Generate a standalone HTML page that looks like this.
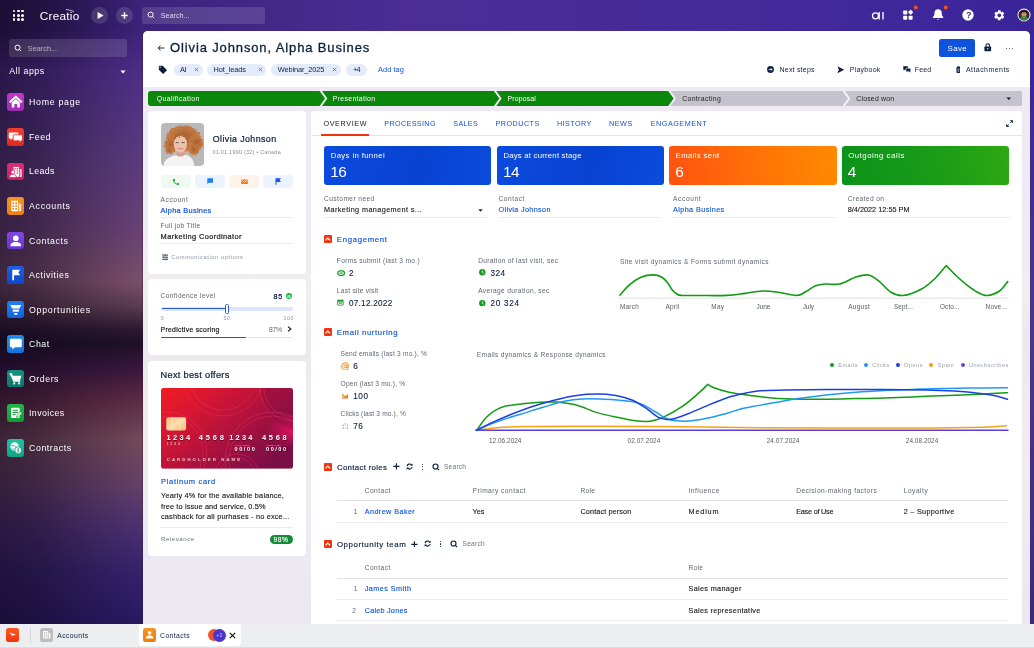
<!DOCTYPE html>
<html lang="en"><head><meta charset="utf-8"><title>Olivia Johnson, Alpha Busines</title>
<style>
html,body{margin:0;padding:0}
body{width:1034px;height:648px;overflow:hidden;font-family:"Liberation Sans",sans-serif;background:#2a1650}
#r{position:relative;width:1034px;height:648px;overflow:hidden;
background:linear-gradient(90deg,#2c1958 0,#3c237c 14%,#4b2d95 40%,#442b99 70%,#39249a 100%)}
#r>div,#r>span,#r>svg{position:absolute;display:block}
#r>span{white-space:nowrap}
#r{will-change:transform}
</style></head><body><div id="r">

<div style="left:0;top:0;width:143.5px;height:624px;background:linear-gradient(90deg,rgba(14,5,24,.55) 0,rgba(14,5,24,.45) 25%,rgba(14,5,24,.2) 65%,rgba(14,5,24,0) 100%),linear-gradient(180deg,rgba(74,44,133,0) 0,rgba(74,44,133,0) 28px,#4d2e88 70px,#5a3a80 150px,#6a4275 230px,#7b5069 282px,#5c3c50 306px,#2c1932 330px,#1e1128 343px,#391640 368px,#5c2a42 398px,#744a5a 440px,#664069 484px,#4c3172 528px,#35236c 572px,#271962 624px)"></div>
<div style="left:1030.3px;top:31px;width:3.7px;height:593px;background:linear-gradient(180deg,#38239a,#4a3590 50%,#3a2a7a)"></div>
<div style="left:12.6px;top:9.6px;width:2.60px;height:2.60px;background:#ffffff;border-radius:2px;"></div>
<div style="left:17.0px;top:9.6px;width:2.60px;height:2.60px;background:#ffffff;border-radius:2px;"></div>
<div style="left:21.4px;top:9.6px;width:2.60px;height:2.60px;background:#ffffff;border-radius:2px;"></div>
<div style="left:12.6px;top:14.0px;width:2.60px;height:2.60px;background:#ffffff;border-radius:2px;"></div>
<div style="left:17.0px;top:14.0px;width:2.60px;height:2.60px;background:#ffffff;border-radius:2px;"></div>
<div style="left:21.4px;top:14.0px;width:2.60px;height:2.60px;background:#ffffff;border-radius:2px;"></div>
<div style="left:12.6px;top:18.4px;width:2.60px;height:2.60px;background:#ffffff;border-radius:2px;"></div>
<div style="left:17.0px;top:18.4px;width:2.60px;height:2.60px;background:#ffffff;border-radius:2px;"></div>
<div style="left:21.4px;top:18.4px;width:2.60px;height:2.60px;background:#ffffff;border-radius:2px;"></div>
<svg style="left:65px;top:8.5px" width="10" height="4" viewBox="0 0 10 4"><path d="M.8.600C4 .900 6.500 1.500 9 2.800" stroke="#fff" stroke-width=".7" fill="none"/></svg>
<div style="left:90.5px;top:6.6px;width:17.40px;height:17.40px;background:rgba(255,255,255,.13);border-radius:9px;"></div>
<div style="left:116.1px;top:6.6px;width:17.40px;height:17.40px;background:rgba(255,255,255,.13);border-radius:9px;"></div>
<svg style="left:95.5px;top:10.8px" width="9" height="9" viewBox="0 0 9 9"><path d="M1.6 0.9 L7.6 4.5 L1.6 8.1 Z" fill="#fff"/></svg>
<svg style="left:120.3px;top:10.8px" width="9" height="9" viewBox="0 0 9 9"><path d="M4.5 1.3V7.7M1.3 4.5H7.7" stroke="#fff" stroke-width="1.5" fill="none"/></svg>
<div style="left:142.2px;top:6.5px;width:122.60px;height:17.30px;background:rgba(255,255,255,.13);border-radius:2.5px;"></div>
<svg style="left:146.6px;top:11.2px" width="8" height="8" viewBox="0 0 8 8"><circle cx="3.600" cy="3.600" r="2.500" stroke="#fff" stroke-width="1" fill="none"/><path d="M5.400 5.400L7 7" stroke="#fff" stroke-width="1"/></svg>
<div style="left:9.2px;top:39.3px;width:117.80px;height:17.30px;background:rgba(255,255,255,.13);border-radius:2.5px;"></div>
<svg style="left:14px;top:43.9px" width="8" height="8" viewBox="0 0 8 8"><circle cx="3.600" cy="3.600" r="2.500" stroke="#fff" stroke-width="1" fill="none"/><path d="M5.400 5.400L7 7" stroke="#fff" stroke-width="1"/></svg>
<svg style="left:120px;top:69.6px" width="6" height="4" viewBox="0 0 6 4"><path d="M0.4 0.5H5.6L3 3.5Z" fill="#fff"/></svg>
<div style="left:6.9px;top:93.4px;width:17.60px;height:17.60px;background:linear-gradient(180deg,#c536c8,#9a2db4);border-radius:3px;"></div>
<svg style="left:6.9px;top:93.40px" width="17.6" height="17.6" viewBox="0 0 18 18"><path d="M2.800 9.400L9 3.800L15.200 9.400" stroke="#fff" stroke-width="2" fill="none" stroke-linejoin="miter"/><path d="M4.900 9.800L9 6.200L13.100 9.800V14.800H10.500V11.300H7.500V14.800H4.900Z" fill="#fff"/></svg>
<div style="left:6.9px;top:127.96px;width:17.60px;height:17.60px;background:linear-gradient(180deg,#ef3f2c,#dc2a26);border-radius:3px;"></div>
<svg style="left:6.9px;top:127.96px" width="17.6" height="17.6" viewBox="0 0 18 18"><path d="M2.6 4.6h8.2a.8.8 0 0 1 .8.8v4.6a.8.8 0 0 1-.8.8H5.4L3.6 12.4V10.8H2.6a.8.8 0 0 1-.8-.8V5.4a.8.8 0 0 1 .8-.8z" fill="#fff"/><path d="M7.2 6.9h7.6a.9.9 0 0 1 .9.9v4.4a.9.9 0 0 1-.9.9h-.6v1.7l-2-1.7H7.2a.9.9 0 0 1-.9-.9V7.8a.9.9 0 0 1 .9-.9z" fill="#fff" stroke="#e5342a" stroke-width=".9"/></svg>
<div style="left:6.9px;top:162.51999999999998px;width:17.60px;height:17.60px;background:linear-gradient(180deg,#e02c73,#c81f62);border-radius:3px;"></div>
<svg style="left:6.9px;top:162.52px" width="17.6" height="17.6" viewBox="0 0 18 18"><path d="M6.6 4h5.6v10.2H6.6z" fill="#fff"/><path d="M13 6.4h2v7.8h-2z" fill="#fff"/><g fill="#d9266e"><rect x="7.6" y="5.2" width="1.3" height="1.3"/><rect x="9.9" y="5.2" width="1.3" height="1.3"/><rect x="9.9" y="7.5" width="1.3" height="1.3"/><rect x="9.9" y="9.8" width="1.3" height="1.3"/><rect x="13.5" y="7.6" width="1" height=".9"/><rect x="13.5" y="9.6" width="1" height=".9"/><rect x="13.5" y="11.6" width="1" height=".9"/></g><circle cx="6" cy="9.3" r="2.3" fill="#d9266e"/><circle cx="6" cy="9.3" r="1.6" fill="#fff"/><path d="M2.4 14.8c0-2.3 1.6-3.3 3.6-3.3s3.6 1 3.6 3.3z" fill="#fff" stroke="#d9266e" stroke-width=".8"/></svg>
<div style="left:6.9px;top:197.07999999999998px;width:17.60px;height:17.60px;background:linear-gradient(180deg,#f7941f,#ee7d14);border-radius:3px;"></div>
<svg style="left:6.9px;top:197.08px" width="17.6" height="17.6" viewBox="0 0 18 18"><rect x="4.3" y="3.9" width="7.2" height="10.6" rx=".8" fill="#fff"/><rect x="12.3" y="6.8" width="2.2" height="7.7" rx=".5" fill="#fff"/><g fill="#f28a1a"><rect x="5.6" y="5.4" width="1.7" height="1.9"/><rect x="8.5" y="5.4" width="1.7" height="1.9"/><rect x="5.6" y="8.3" width="1.7" height="1.9"/><rect x="8.5" y="8.3" width="1.7" height="1.9"/><rect x="5.6" y="11.2" width="1.7" height="1.9"/><rect x="8.5" y="11.2" width="1.7" height="1.9"/><rect x="12.9" y="8.2" width="1" height=".8"/><rect x="12.9" y="10.1" width="1" height=".8"/><rect x="12.9" y="12" width="1" height=".8"/></g></svg>
<div style="left:6.9px;top:231.64px;width:17.60px;height:17.60px;background:linear-gradient(180deg,#8246e6,#6a34d6);border-radius:3px;"></div>
<svg style="left:6.9px;top:231.64px" width="17.6" height="17.6" viewBox="0 0 18 18"><circle cx="9" cy="6.400" r="2.900" fill="#fff"/><path d="M3.500 14.600c0-3.300 2.400-4.400 5.500-4.400s5.500 1.100 5.500 4.400z" fill="#fff"/></svg>
<div style="left:6.9px;top:266.2px;width:17.60px;height:17.60px;background:linear-gradient(180deg,#1b5fe2,#0f48c6);border-radius:3px;"></div>
<svg style="left:6.9px;top:266.20px" width="17.6" height="17.6" viewBox="0 0 18 18"><path d="M5.400 3.800H13.400L11.600 6.600L13.400 9.400H7.200V14.600H5.400Z" fill="#fff"/></svg>
<div style="left:6.9px;top:300.76px;width:17.60px;height:17.60px;background:linear-gradient(180deg,#1f80f2,#1263e0);border-radius:3px;"></div>
<svg style="left:6.9px;top:300.76px" width="17.6" height="17.6" viewBox="0 0 18 18"><path d="M3.400 4.200H14.600L12.800 7.600H5.200Z" fill="#fff"/><rect x="5.800" y="8.800" width="6.400" height="2.100" rx=".5" fill="#fff"/><rect x="7.200" y="12.200" width="3.600" height="1.900" rx=".5" fill="#fff"/></svg>
<div style="left:6.9px;top:335.32px;width:17.60px;height:17.60px;background:linear-gradient(180deg,#1f8df0,#1473de);border-radius:3px;"></div>
<svg style="left:6.9px;top:335.32px" width="17.6" height="17.6" viewBox="0 0 18 18"><path d="M4.200 3.900h9.600a1.300 1.300 0 0 1 1.300 1.300v6a1.300 1.300 0 0 1-1.300 1.300H8.300L5.500 14.800V12.500H4.200a1.300 1.300 0 0 1-1.300-1.300V5.200a1.300 1.300 0 0 1 1.300-1.300z" fill="#fff"/></svg>
<div style="left:6.9px;top:369.88px;width:17.60px;height:17.60px;background:linear-gradient(180deg,#17907f,#0e766a);border-radius:3px;"></div>
<svg style="left:6.9px;top:369.88px" width="17.6" height="17.6" viewBox="0 0 18 18"><path d="M2.600 4h2.200l.6 1.800h9.400l-1.600 5.200H6.400z" fill="#fff"/><path d="M2.600 4h2.200L6.800 11.400h6.800" stroke="#fff" stroke-width="1.100" fill="none"/><circle cx="7.400" cy="13.700" r="1.100" fill="#fff"/><circle cx="12.400" cy="13.700" r="1.100" fill="#fff"/></svg>
<div style="left:6.9px;top:404.44px;width:17.60px;height:17.60px;background:linear-gradient(180deg,#22b84a,#129a38);border-radius:3px;"></div>
<svg style="left:6.9px;top:404.44px" width="17.6" height="17.6" viewBox="0 0 18 18"><rect x="4.200" y="3.800" width="8.800" height="10.600" rx="1.200" fill="#fff"/><g stroke="#1a9e3a" stroke-width="1.100"><path d="M5.800 6.400h5.600M5.800 8.600h5.600M5.800 10.800h3"/></g><path d="M9.800 13.600l.5-2 3.700-3.700 1.500 1.500-3.700 3.700z" fill="#fff" stroke="#1a9e3a" stroke-width=".8"/></svg>
<div style="left:6.9px;top:439.0px;width:17.60px;height:17.60px;background:linear-gradient(180deg,#1fc2a2,#0fa386);border-radius:3px;"></div>
<svg style="left:6.9px;top:439.00px" width="17.6" height="17.6" viewBox="0 0 18 18"><circle cx="7.800" cy="7.600" r="4.300" fill="#fff"/><path d="M4 6.600c1.500.8 2.500-.3 3.800.3s1 2 2.600 1.700M5 10.400c1-.5 1.600-.2 2.400.4" stroke="#14a88a" stroke-width=".8" fill="none"/><circle cx="11.400" cy="11.400" r="3.500" fill="#fff" stroke="#14a88a" stroke-width="1"/><path d="M12.300 10.300c-.6-.5-1.800-.3-1.800.4 0 .9 1.900.5 1.900 1.400 0 .8-1.300.9-2 .4M11.400 9.400v4" stroke="#14a88a" stroke-width=".7" fill="none"/></svg>
<div style="left:142.3px;top:34px;width:0.90px;height:590.00px;background:rgba(50,14,44,.32);border-radius:0px;"></div>
<div style="left:143px;top:30.5px;width:887.30px;height:593.50px;background:linear-gradient(180deg,#edeaf4 0,#eeebf3 200px,#f1eef0 260px,#ebe9ed 310px,#efebee 370px,#efecf1 450px,#ece9f2 530px,#ebe8f3 594px);border-radius:5px;border-radius:5px 5px 0 0;"></div>
<div style="left:143px;top:30.5px;width:887.30px;height:56.10px;background:#ffffff;border-radius:5px;border-radius:5px 5px 0 0;"></div>
<svg style="left:156.800px;top:43.600px" width="8" height="8" viewBox="0 0 8 8"><path d="M7.400 4H1.200M3.500 1.700L1.100 4L3.500 6.300" stroke="#0c1f3f" stroke-width=".95" fill="none"/></svg>
<div style="left:939px;top:39.3px;width:36.00px;height:17.70px;background:#0d53db;border-radius:2.5px;"></div>
<div style="left:174px;top:63.5px;width:28.50px;height:12.30px;background:#e4ebfa;border-radius:7px;"></div>
<div style="left:207.2px;top:63.5px;width:59.20px;height:12.30px;background:#e4ebfa;border-radius:7px;"></div>
<div style="left:271.1px;top:63.5px;width:69.80px;height:12.30px;background:#e4ebfa;border-radius:7px;"></div>
<div style="left:345.8px;top:63.5px;width:20.90px;height:12.30px;background:#e4ebfa;border-radius:7px;"></div>
<svg style="left:193.7px;top:67.1px" width="5" height="5" viewBox="0 0 5 5"><path d="M0.8 0.8L4.2 4.2M4.2 0.8L0.8 4.2" stroke="#5d6b82" stroke-width=".8"/></svg>
<svg style="left:257.7px;top:67.1px" width="5" height="5" viewBox="0 0 5 5"><path d="M0.8 0.8L4.2 4.2M4.2 0.8L0.8 4.2" stroke="#5d6b82" stroke-width=".8"/></svg>
<svg style="left:332.1px;top:67.1px" width="5" height="5" viewBox="0 0 5 5"><path d="M0.8 0.8L4.2 4.2M4.2 0.8L0.8 4.2" stroke="#5d6b82" stroke-width=".8"/></svg>
<svg style="left:147.6px;top:91px" width="874.6" height="15" viewBox="0 0 874.6 15"><rect x="0" y="0" width="524.8" height="15" rx="3" fill="#0b870b"/><rect x="518.8" y="0" width="355.8" height="15" rx="3" fill="#c4c3cd"/><path d="M514.8 0H521.0L526.8 7.5L521.0 15H514.8Z" fill="#0b870b"/><path d="M172.4 -0.6L178.2 7.5L172.4 15.6" stroke="#f4f4fa" stroke-width="1.9" fill="none"/><path d="M346.7 -0.6L352.5 7.5L346.7 15.6" stroke="#f4f4fa" stroke-width="1.9" fill="none"/><path d="M521.0 -0.6L526.8 7.5L521.0 15.6" stroke="#f4f4fa" stroke-width="1.9" fill="none"/><path d="M695.3 -0.6L701.1 7.5L695.3 15.6" stroke="#f4f4fa" stroke-width="1.9" fill="none"/><path d="M858.4 6.4h4.8l-2.400 2.700z" fill="#1a1a22"/></svg>
<div style="left:148.2px;top:110.7px;width:158.00px;height:163.20px;background:#ffffff;border-radius:4px;"></div>
<div style="left:148.2px;top:279.2px;width:158.00px;height:76.30px;background:#ffffff;border-radius:4px;"></div>
<div style="left:148.2px;top:361px;width:158.00px;height:194.60px;background:#ffffff;border-radius:4px;"></div>
<div style="left:311px;top:110.5px;width:711.00px;height:513.50px;background:#ffffff;border-radius:4px;border-radius:4px 4px 0 0;"></div>
<div style="left:160.8px;top:175.3px;width:29.90px;height:12.50px;background:#f0f9f1;border-radius:3.5px;"></div>
<div style="left:195px;top:175.3px;width:29.90px;height:12.50px;background:#ebf3fe;border-radius:3.5px;"></div>
<div style="left:229.2px;top:175.3px;width:29.90px;height:12.50px;background:#fef3eb;border-radius:3.5px;"></div>
<div style="left:263.4px;top:175.3px;width:29.90px;height:12.50px;background:#edf3fe;border-radius:3.5px;"></div>
<div style="left:160.6px;top:217px;width:132.70px;height:0.60px;background:#eaecf0;border-radius:0px;"></div>
<div style="left:160.6px;top:242.8px;width:132.70px;height:0.60px;background:#eaecf0;border-radius:0px;"></div>
<div style="left:285.6px;top:292.6px;width:6.80px;height:6.80px;background:#18b34a;border-radius:3.4px;"></div>
<div style="left:287.3px;top:294.6px;width:3.40px;height:3.00px;background:#7fe3a0;border-radius:0.8px;"></div>
<div style="left:160.6px;top:306.8px;width:132.70px;height:3.90px;background:#dce6fb;border-radius:2px;"></div>
<div style="left:162px;top:308.1px;width:65.00px;height:1.40px;background:#2b5cd9;border-radius:1px;"></div>
<div style="left:224.9px;top:303.9px;width:4.20px;height:9.80px;background:#ffffff;border-radius:1.6px;box-sizing:border-box;border:1.1px solid #2b5cd9;"></div>
<svg style="left:286.5px;top:326.3px" width="5" height="6" viewBox="0 0 5 6"><path d="M1 0.6L3.8 3L1 5.4" stroke="#0c1f3f" stroke-width="1.2" fill="none"/></svg>
<div style="left:160.6px;top:336.5px;width:132.70px;height:1.90px;background:#dce6fb;border-radius:1px;"></div>
<div style="left:160.6px;top:336.5px;width:85.20px;height:1.90px;background:#1f4fd6;border-radius:1px;"></div>
<div style="left:160.8px;top:527.2px;width:132.50px;height:0.60px;background:#eaecf0;border-radius:0px;"></div>
<div style="left:269.7px;top:534.5px;width:23.70px;height:9.30px;background:#138a36;border-radius:4.7px;"></div>
<div style="left:311px;top:135.2px;width:711.00px;height:0.60px;background:#e3e5ea;border-radius:0px;"></div>
<div style="left:321.3px;top:134.3px;width:47.70px;height:1.60px;background:#f0340f;border-radius:0px;"></div>
<div style="left:324.1px;top:145.8px;width:167.10px;height:39.00px;background:linear-gradient(100deg,#0c4be0,#0742d0 55%,#0a4cdc);border-radius:3px;"></div>
<div style="left:496.8px;top:145.8px;width:167.20px;height:39.00px;background:linear-gradient(100deg,#0c4be0,#0742d0 55%,#0a4cdc);border-radius:3px;"></div>
<div style="left:669px;top:145.8px;width:167.50px;height:39.00px;background:linear-gradient(80deg,#ff5210,#ff7606 60%,#ff8a00);border-radius:3px;"></div>
<div style="left:841.6px;top:145.8px;width:167.40px;height:39.00px;background:linear-gradient(80deg,#0c9219,#1a9c18 55%,#2ea812);border-radius:3px;"></div>
<div style="left:324px;top:217px;width:162.50px;height:0.60px;background:#eaecf0;border-radius:0px;"></div>
<div style="left:498.5px;top:217px;width:162.50px;height:0.60px;background:#eaecf0;border-radius:0px;"></div>
<div style="left:673px;top:217px;width:162.50px;height:0.60px;background:#eaecf0;border-radius:0px;"></div>
<div style="left:847.7px;top:217px;width:162.50px;height:0.60px;background:#eaecf0;border-radius:0px;"></div>
<svg style="left:478px;top:208.6px" width="5" height="3" viewBox="0 0 5 3"><path d="M0.3 0.3H4.7L2.5 2.8Z" fill="#222"/></svg>
<div style="left:323.9px;top:235.3px;width:8.10px;height:8.00px;background:#f0340f;border-radius:1px;"></div>
<svg style="left:325.2px;top:237.1px" width="5.6" height="4" viewBox="0 0 5.6 4"><path d="M0.6 3.3L2.8 1L5 3.3" stroke="#fff" stroke-width="1.1" fill="none"/></svg>
<div style="left:323.9px;top:328.3px;width:8.10px;height:8.00px;background:#f0340f;border-radius:1px;"></div>
<svg style="left:325.2px;top:330.1px" width="5.6" height="4" viewBox="0 0 5.6 4"><path d="M0.6 3.3L2.8 1L5 3.3" stroke="#fff" stroke-width="1.1" fill="none"/></svg>
<div style="left:830px;top:362.8px;width:4.00px;height:4.00px;background:#169c1f;border-radius:2px;"></div>
<div style="left:864.3px;top:362.8px;width:4.00px;height:4.00px;background:#1e96f0;border-radius:2px;"></div>
<div style="left:896px;top:362.8px;width:4.00px;height:4.00px;background:#1741e6;border-radius:2px;"></div>
<div style="left:929.3px;top:362.8px;width:4.00px;height:4.00px;background:#f59e1b;border-radius:2px;"></div>
<div style="left:961px;top:362.8px;width:4.00px;height:4.00px;background:#6a3fe0;border-radius:2px;"></div>
<div style="left:323.9px;top:462.8px;width:8.10px;height:8.00px;background:#f0340f;border-radius:1px;"></div>
<svg style="left:325.2px;top:464.6px" width="5.6" height="4" viewBox="0 0 5.6 4"><path d="M0.6 3.3L2.8 1L5 3.3" stroke="#fff" stroke-width="1.1" fill="none"/></svg>
<div style="left:336.8px;top:500.3px;width:671.70px;height:0.60px;background:#e1e3e7;border-radius:0px;"></div>
<div style="left:336.8px;top:521.8px;width:671.70px;height:0.60px;background:#eaecf0;border-radius:0px;"></div>
<div style="left:323.9px;top:540px;width:8.10px;height:8.00px;background:#f0340f;border-radius:1px;"></div>
<svg style="left:325.2px;top:541.8px" width="5.6" height="4" viewBox="0 0 5.6 4"><path d="M0.6 3.3L2.8 1L5 3.3" stroke="#fff" stroke-width="1.1" fill="none"/></svg>
<div style="left:336.8px;top:577.5px;width:671.70px;height:0.60px;background:#e1e3e7;border-radius:0px;"></div>
<div style="left:336.8px;top:599.1px;width:671.70px;height:0.60px;background:#eaecf0;border-radius:0px;"></div>
<div style="left:336.8px;top:620.3px;width:671.70px;height:0.60px;background:#eaecf0;border-radius:0px;"></div>
<div style="left:0px;top:623.8px;width:1034.00px;height:24.20px;background:#eceeef;border-radius:0px;"></div>
<div style="left:0px;top:647px;width:1034.00px;height:1.00px;background:#dcdee0;border-radius:0px;"></div>
<div style="left:138.7px;top:623.8px;width:102.70px;height:21.80px;background:#ffffff;border-radius:4px;border-radius:0 0 4px 4px;"></div>
<div style="left:5.8px;top:628.4px;width:13.30px;height:13.20px;background:linear-gradient(180deg,#ff5a1f,#f0340f);border-radius:2.5px;"></div>
<div style="left:30px;top:627.5px;width:0.50px;height:15.50px;background:#d3d6db;border-radius:0px;"></div>
<div style="left:40px;top:628.4px;width:12.90px;height:13.20px;background:#bdbdbd;border-radius:2.5px;"></div>
<div style="left:142.7px;top:628.4px;width:13.30px;height:13.20px;background:linear-gradient(180deg,#f7941f,#ee7d14);border-radius:2.5px;"></div>
<div style="left:207.5px;top:629px;width:12.00px;height:12.00px;background:#f0542a;border-radius:6px;"></div>
<div style="left:212.8px;top:628.5px;width:13.00px;height:13.00px;background:#4a35c9;border-radius:6.5px;"></div>
<svg style="left:228.5px;top:631.5px" width="7" height="7" viewBox="0 0 7 7"><path d="M0.8 0.8L6.2 6.2M6.2 0.8L0.8 6.2" stroke="#111" stroke-width="1.1"/></svg>
<svg style="left:871px;top:9.5px" width="14" height="11" viewBox="0 0 14 11"><circle cx="4.5" cy="5.8" r="3" stroke="#fff" stroke-width="1.35" fill="none"/><path d="M8.2 2.1V9.5M12 2.1V9.5" stroke="#fff" stroke-width="1.35"/></svg>
<svg style="left:902px;top:4px" width="18" height="18" viewBox="0 0 18 18"><rect x="1.2" y="6.6" width="4" height="4" rx=".7" fill="#fff"/><rect x="1.2" y="11.8" width="4" height="4" rx=".7" fill="#fff"/><rect x="6.6" y="11.8" width="4" height="4" rx=".7" fill="#fff"/><rect x="6.7" y="6.4" width="3.8" height="3.8" rx=".7" fill="#fff" transform="rotate(45 8.6 8.3)"/><circle cx="13.8" cy="3.4" r="2" fill="#f4511e"/></svg>
<svg style="left:931px;top:4px" width="18" height="18" viewBox="0 0 18 18"><path d="M7.1 5.2a3.600 3.600 0 0 1 3.600 3.600c0 2.400.7 3.400 1.500 4.200.3.300.1.900-.4.900H2.400c-.5 0-.7-.6-.4-.9.800-.8 1.500-1.800 1.500-4.200a3.600 3.600 0 0 1 3.600-3.600z" fill="#fff"/><path d="M5.900 15a1.300 1.300 0 0 0 2.400 0z" fill="#fff"/><circle cx="14.700" cy="3.400" r="2" fill="#f4511e"/></svg>
<svg style="left:962.4px;top:9.1px" width="12" height="12" viewBox="0 0 12 12"><circle cx="6" cy="6" r="5.700" fill="#fff"/></svg>
<svg style="left:992.5px;top:8.800px" width="12.600" height="12.600" viewBox="0 0 24 24"><path fill="#fff" d="M19.140 12.940c.040-.300.060-.610.060-.940 0-.320-.020-.640-.070-.940l2.030-1.580a.490.490 0 0 0 .12-.61l-1.920-3.320a.488.488 0 0 0-.59-.22l-2.390.96c-.5-.38-1.030-.7-1.620-.94l-.36-2.540a.484.484 0 0 0-.48-.41h-3.840c-.24 0-.43.170-.47.410l-.36 2.540c-.59.240-1.130.57-1.620.94l-2.390-.96c-.22-.08-.47 0-.59.220L2.740 8.870c-.12.210-.8.470.12.610l2.030 1.580c-.5.300-.9.630-.9.940s.2.640.7.940l-2.030 1.580a.49.490 0 0 0-.12.610l1.920 3.320c.12.220.37.290.59.220l2.390-.96c.5.380 1.030.7 1.620.94l.36 2.540c.5.240.24.410.48.410h3.840c.24 0 .44-.17.470-.41l.36-2.540c.59-.24 1.130-.56 1.620-.94l2.390.96c.22.080.47 0 .59-.22l1.920-3.320c.12-.22.070-.47-.12-.61l-2.010-1.580zM12 15.600c-1.980 0-3.600-1.620-3.600-3.600s1.620-3.600 3.600-3.600 3.600 1.620 3.600 3.600-1.620 3.600-3.600 3.600z"/></svg>
<svg style="left:1017.300px;top:8.100px" width="16.700" height="14" viewBox="0 0 16.700 14"><circle cx="7" cy="7" r="6.500" fill="#fff"/><circle cx="7" cy="7" r="5.600" fill="#3a2a24"/><ellipse cx="7" cy="6.300" rx="2.500" ry="3" fill="#c98f74"/><path d="M2.600 10.300c1.200-1.500 2.800-1.700 4.400-1.700s3.200.2 4.400 1.700a5.600 5.600 0 0 1-8.800 0z" fill="#2d8a4a"/><path d="M3.400 6.800c-.3-3.300 1.700-4.700 3.600-4.700s3.900 1.400 3.600 4.700c-.6-1.800-1.700-2.500-3.600-2.500s-3 .7-3.600 2.500z" fill="#2a1a16"/></svg>
<svg style="left:984.300px;top:43px" width="7.500" height="8.500" viewBox="0 0 7.500 8.500"><rect x=".4" y="3.500" width="6.700" height="4.800" rx=".8" fill="#0c1f3f"/><path d="M2 3.800V2.500a1.750 1.750 0 0 1 3.500 0V3.800" stroke="#0c1f3f" stroke-width="1.100" fill="none"/><circle cx="3.750" cy="5.700" r=".7" fill="#fff"/></svg>
<div style="left:1005.95px;top:47.5px;width:1.10px;height:1.10px;background:#333b4d;border-radius:1px;"></div>
<div style="left:1008.95px;top:47.5px;width:1.10px;height:1.10px;background:#333b4d;border-radius:1px;"></div>
<div style="left:1011.95px;top:47.5px;width:1.10px;height:1.10px;background:#333b4d;border-radius:1px;"></div>
<svg style="left:158.200px;top:65px" width="9.600" height="9.600" viewBox="0 0 24 24"><path fill="#0c1f3f" d="M21.410 11.580l-9-9C12.050 2.220 11.550 2 11 2H4c-1.100 0-2 .9-2 2v7c0 .55.220 1.050.59 1.420l9 9c.36.360.86.580 1.410.580s1.050-.22 1.410-.59l7-7c.37-.36.59-.86.59-1.410s-.23-1.060-.59-1.420zM5.500 7C4.670 7 4 6.330 4 5.500S4.670 4 5.500 4 7 4.670 7 5.500 6.330 7 5.500 7z"/></svg>
<svg style="left:767.400px;top:66.200px" width="7" height="7" viewBox="0 0 7 7"><circle cx="3.500" cy="3.500" r="3.400" fill="#0c1f3f"/><path d="M1.700 3.500H5M3.700 2.100L5.100 3.500L3.700 4.900" stroke="#fff" stroke-width=".8" fill="none"/></svg>
<svg style="left:837.200px;top:65.800px" width="7.500" height="7.600" viewBox="0 0 7.500 7.600"><path d="M.4.300L7.200 3.800L.4 7.300L1.900 3.800Z" fill="#0c1f3f"/></svg>
<svg style="left:902.600px;top:66.300px" width="8" height="7" viewBox="0 0 8 7"><path d="M.3.300h4.600v3.400H1.700L.8 4.600V3.700H.3z" fill="#0c1f3f"/><path d="M3 2.300h4.700v3.400h-.5v1l-1.100-1H3z" fill="#0c1f3f" stroke="#fff" stroke-width=".5"/></svg>
<svg style="left:955.600px;top:65.700px" width="4.800" height="7.700" viewBox="0 0 5.500 8.800"><path d="M.5 2.600a2.250 2.250 0 0 1 4.500 0V6.200a2.250 2.250 0 0 1-4.500 0z" fill="#0c1f3f"/><path d="M2.100 2.800V5.800a.65.650 0 0 0 1.300 0V2.600" stroke="#fff" stroke-width=".55" fill="none"/></svg>
<svg style="left:1005.800px;top:119.600px" width="7.200" height="7.200" viewBox="0 0 7.200 7.200"><path d="M4.300.4H6.800V2.900ZM2.900 6.800H.4V4.300Z" fill="#0c1f3f" stroke="#0c1f3f" stroke-width=".5" stroke-linejoin="round"/><path d="M6.300.9L4.400 2.800M.9 6.300L2.800 4.400" stroke="#0c1f3f" stroke-width="1"/></svg>
<svg style="left:160.800px;top:123px" width="43.200" height="43" viewBox="0 0 43.200 43">
<defs><clipPath id="pc"><rect width="43.200" height="43" rx="4"/></clipPath>
<filter id="bl" x="-20%" y="-20%" width="140%" height="140%"><feGaussianBlur stdDeviation=".6"/></filter>
<filter id="fz" x="-20%" y="-20%" width="140%" height="140%"><feTurbulence type="fractalNoise" baseFrequency=".55" numOctaves="2" seed="7" result="n"/><feDisplacementMap in="SourceGraphic" in2="n" scale="4.500" xChannelSelector="R" yChannelSelector="G"/><feGaussianBlur stdDeviation=".35"/></filter>
<radialGradient id="hg" cx=".5" cy=".45" r=".6"><stop offset="0" stop-color="#a95f30"/><stop offset=".6" stop-color="#bf763f"/><stop offset="1" stop-color="#d08c55"/></radialGradient></defs>
<g clip-path="url(#pc)"><rect width="43.200" height="43" fill="#b9b9bb"/>
<g fill="url(#hg)" filter="url(#fz)"><ellipse cx="22.500" cy="15.500" rx="17.500" ry="13"/><circle cx="10" cy="22" r="7"/><circle cx="35.500" cy="20" r="7.500"/><circle cx="33" cy="27" r="5.500"/><circle cx="8.500" cy="27.500" r="4"/></g>
<path d="M16.500 27h6.500l1.500 7h-9.500z" fill="#d9a287"/>
<ellipse cx="19.400" cy="20.800" rx="6.600" ry="8.600" fill="#ecc3ad" filter="url(#bl)"/>
<path d="M12.500 18c0-5.500 3.500-8 7.500-8 3 0 6 2 7 6.500-3-1.300-4-3.500-5.500-4-3 .5-6.500 1.800-9 5.500z" fill="#b06634" filter="url(#fz)"/>
<path d="M14.600 19.600h3M20.600 19.600h3.200" stroke="#5f4638" stroke-width=".9"/>
<path d="M16.300 25.200q3 2.200 6.200 0q-3.100 1-6.200 0z" fill="#e07080" stroke="#d9717a" stroke-width=".5"/>
<path d="M2.500 43c.5-6.500 5-9 12.500-11 2.500 2.200 6.500 2.200 9-.3 5.500 1.500 8.500 4 9.500 11.300z" fill="#f3f3f3" filter="url(#bl)"/>
</g></svg>
<svg style="left:171.700px;top:177.600px" width="8" height="8" viewBox="0 0 24 24"><path fill="#1a9e2a" d="M6.620 10.790c1.440 2.830 3.760 5.140 6.590 6.590l2.200-2.200c.27-.27.670-.36 1.020-.24 1.120.37 2.330.57 3.570.57.550 0 1 .45 1 1V20c0 .55-.45 1-1 1-9.390 0-17-7.610-17-17 0-.55.450-1 1-1h3.500c.55 0 1 .45 1 1 0 1.250.2 2.450.57 3.570.11.350.3.740-.25 1.020l-2.200 2.200z"/></svg>
<svg style="left:206.800px;top:178.400px" width="6.400" height="6.400" viewBox="0 0 6.400 6.400"><path d="M.3.300H6.100V4.700H1.900L.3 6.100Z" fill="#1a7fe8"/></svg>
<svg style="left:240.600px;top:178.600px" width="7" height="5.800" viewBox="0 0 7 5.800"><rect x=".2" y=".4" width="6.600" height="5.200" rx=".7" fill="#f57a10"/><path d="M.6.800L3.500 3.300L6.400.8" stroke="#fdeee2" stroke-width=".8" fill="none"/></svg>
<svg style="left:275.400px;top:178.100px" width="6.200" height="7" viewBox="0 0 6.200 7"><path d="M.5.300H6L4.600 2.200L6 4.100H1.500V6.800H.5Z" fill="#1a4fe0"/></svg>
<svg style="left:161.500px;top:254.300px" width="6.400" height="6.400" viewBox="0 0 6.400 6.400"><g stroke="#0c1f3f" stroke-width=".9"><path d="M.2 1.100H2.400M3.800 1.100H6.200M.2 3.200H1.200M2.600 3.200H6.200M.2 5.300H3.400M4.800 5.300H6.200"/><path d="M3.100.2V2M1.900 2.300V4.100M4.100 4.400V6.200" stroke-width="1"/></g></svg>
<svg style="left:160.900px;top:387.800px" width="132" height="80.800" viewBox="0 0 132 80.800">
<defs><clipPath id="cc"><rect width="132" height="80.800" rx="2.800"/></clipPath>
<linearGradient id="cg" x1="0" y1="0" x2="1" y2=".75"><stop offset="0" stop-color="#f01d22"/><stop offset=".3" stop-color="#d51633"/><stop offset=".6" stop-color="#b0113d"/><stop offset=".85" stop-color="#8a0f44"/><stop offset="1" stop-color="#7a0e46"/></linearGradient>
<radialGradient id="cp" cx="1.020" cy=".52" r=".22"><stop offset="0" stop-color="#f0105e"/><stop offset="1" stop-color="#f0105e" stop-opacity="0"/></radialGradient>
<linearGradient id="ch" x1="0" y1="0" x2="1" y2="1"><stop offset="0" stop-color="#f6bf78"/><stop offset=".5" stop-color="#fbdcaa"/><stop offset="1" stop-color="#f3b56c"/></linearGradient></defs>
<g clip-path="url(#cc)"><rect width="132" height="80.800" fill="url(#cg)"/><rect width="132" height="80.800" fill="url(#cp)"/>
<path d="M100 0H132V42C116 38 102 22 100 0Z" fill="#7d0f47" opacity=".34"/>
<g fill="none" stroke="#ff3a6e" stroke-opacity=".5" stroke-width=".65"><circle cx="62" cy="-12" r="34"/><circle cx="62" cy="-12" r="40"/><circle cx="132" cy="0" r="33"/><circle cx="132" cy="0" r="29"/><circle cx="112" cy="72" r="44"/><circle cx="112" cy="72" r="48"/><circle cx="6" cy="64" r="36"/><circle cx="6" cy="64" r="40"/><circle cx="76" cy="88" r="22"/><circle cx="76" cy="88" r="18"/></g>
<rect x="5.300" y="29.300" width="19.800" height="13.200" rx="2" fill="url(#ch)"/>
<path d="M5.300 33.600h6.200v4.600H5.300M25.100 33.600h-6.200v4.600h6.200M11.500 29.300v13.200M18.900 29.300v13.200" stroke="#fde8c4" stroke-width=".5" fill="none"/>
</g></svg>
<svg style="left:336.800px;top:269.600px" width="8.200" height="6.200" viewBox="0 0 8.200 6.200"><rect x=".7" y=".9" width="6.800" height="4.400" rx="2.200" stroke="#149c22" stroke-width="1.200" fill="none"/><path d="M2.400 3.100H5.800" stroke="#149c22" stroke-width="1.100"/><path d="M3.700 0V6.200" stroke="#fff" stroke-width="0"/></svg>
<svg style="left:337.200px;top:299.300px" width="6.800" height="6.800" viewBox="0 0 6.800 6.800"><rect x=".2" y=".9" width="6.400" height="5.700" rx=".8" fill="#149c22"/><rect x="1.100" y="2.700" width="4.600" height="3" fill="#fff"/><rect x="1.700" y="3.400" width="3.400" height="1.200" fill="#149c22"/><path d="M1.800 0V1.500M5 0V1.500" stroke="#149c22" stroke-width=".9"/></svg>
<svg style="left:479px;top:269.4px" width="6.600" height="6.600" viewBox="0 0 6.600 6.600"><circle cx="3.300" cy="3.300" r="3.200" fill="#149c22"/><path d="M3.300 1.400V3.500L4.700 4.300" stroke="#fff" stroke-width=".8" fill="none"/></svg>
<svg style="left:479px;top:299.8px" width="6.600" height="6.600" viewBox="0 0 6.600 6.600"><circle cx="3.300" cy="3.300" r="3.200" fill="#149c22"/><path d="M3.300 1.400V3.500L4.700 4.300" stroke="#fff" stroke-width=".8" fill="none"/></svg>
<svg style="left:340.700px;top:361.700px" width="8.800" height="8.800" viewBox="0 0 8.800 8.800"><path d="M6.900 7.300A3.700 3.700 0 1 1 8.100 4.400C8.100 5.600 7.600 6.100 7 6.100S6 5.600 6 4.800V2.900" stroke="#f5820f" stroke-width="1" fill="none" stroke-linecap="round"/><circle cx="4.400" cy="4.400" r="1.550" stroke="#f5820f" stroke-width="1" fill="none"/></svg>
<svg style="left:341.700px;top:392.800px" width="6.600" height="6" viewBox="0 0 6.600 6"><path d="M.2.600L3.300 3.200L6.400.6V5.600H.2Z" fill="#f5820f"/><path d="M.2 3.400H2.400" stroke="#fff" stroke-width=".7"/></svg>
<svg style="left:341.700px;top:422.600px" width="6.800" height="6.800" viewBox="0 0 6.800 6.800"><g fill="#f5820f"><circle cx="3.400" cy=".9" r=".75"/><circle cx="5.700" cy="2.300" r=".75"/><circle cx="5.400" cy="4.900" r=".75"/><circle cx="1.400" cy="4.900" r=".75"/><circle cx="1.100" cy="2.300" r=".75"/><circle cx="3.400" cy="5.900" r=".6" opacity=".6"/></g></svg>
<svg style="left:393.0px;top:463.3px" width="6.800" height="6.800" viewBox="0 0 6.800 6.800"><path d="M3.400.3V6.500M.3 3.400H6.500" stroke="#0c1f3f" stroke-width="1.150"/></svg>
<svg style="left:405.6px;top:463.1px" width="7.200" height="7.200" viewBox="0 0 7.200 7.200"><path d="M1 3.200A2.700 2.700 0 0 1 5.700 2M6.200 4A2.700 2.700 0 0 1 1.500 5.200" stroke="#0c1f3f" stroke-width="1.100" fill="none"/><path d="M6.600.5V2.700H4.400ZM.6 6.700V4.500H2.800Z" fill="#0c1f3f"/></svg>
<div style="left:421.84999999999997px;top:463.54999999999995px;width:1.10px;height:1.10px;background:#0c1f3f;border-radius:1px;"></div>
<div style="left:421.84999999999997px;top:466.15px;width:1.10px;height:1.10px;background:#0c1f3f;border-radius:1px;"></div>
<div style="left:421.84999999999997px;top:468.75px;width:1.10px;height:1.10px;background:#0c1f3f;border-radius:1px;"></div>
<svg style="left:431.9px;top:462.9px" width="7.800" height="7.800" viewBox="0 0 7.800 7.800"><circle cx="3.500" cy="3.500" r="2.500" stroke="#0c1f3f" stroke-width="1.150" fill="none"/><path d="M5.300 5.300L7.200 7.200" stroke="#0c1f3f" stroke-width="1.150"/></svg>
<svg style="left:411.1px;top:540.6px" width="6.800" height="6.800" viewBox="0 0 6.800 6.800"><path d="M3.400.3V6.500M.3 3.400H6.500" stroke="#0c1f3f" stroke-width="1.150"/></svg>
<svg style="left:424.4px;top:540.4px" width="7.200" height="7.200" viewBox="0 0 7.200 7.200"><path d="M1 3.200A2.700 2.700 0 0 1 5.700 2M6.200 4A2.700 2.700 0 0 1 1.500 5.200" stroke="#0c1f3f" stroke-width="1.100" fill="none"/><path d="M6.600.5V2.700H4.400ZM.6 6.700V4.500H2.800Z" fill="#0c1f3f"/></svg>
<div style="left:440.05px;top:540.85px;width:1.10px;height:1.10px;background:#0c1f3f;border-radius:1px;"></div>
<div style="left:440.05px;top:543.45px;width:1.10px;height:1.10px;background:#0c1f3f;border-radius:1px;"></div>
<div style="left:440.05px;top:546.0500000000001px;width:1.10px;height:1.10px;background:#0c1f3f;border-radius:1px;"></div>
<svg style="left:450.2px;top:540.2px" width="7.800" height="7.800" viewBox="0 0 7.800 7.800"><circle cx="3.500" cy="3.500" r="2.500" stroke="#0c1f3f" stroke-width="1.150" fill="none"/><path d="M5.300 5.300L7.200 7.200" stroke="#0c1f3f" stroke-width="1.150"/></svg>
<svg style="left:5.800px;top:628.400px" width="13.300" height="13.200" viewBox="0 0 13.300 13.200"><path d="M3.200 4.300L10.300 6.900L5.600 7.500L7.300 9.200Z" fill="#fff"/></svg>
<svg style="left:40px;top:628.400px" width="12.900" height="13.200" viewBox="0 0 18 18"><rect x="4.300" y="3.900" width="7.200" height="10.600" rx=".8" fill="#fff"/><rect x="12.300" y="6.800" width="2.200" height="7.700" rx=".5" fill="#fff"/><g fill="#bdbdbd"><rect x="5.600" y="5.400" width="1.700" height="1.900"/><rect x="8.500" y="5.400" width="1.700" height="1.900"/><rect x="5.600" y="8.300" width="1.700" height="1.900"/><rect x="8.500" y="8.300" width="1.700" height="1.900"/><rect x="5.600" y="11.200" width="1.700" height="1.900"/><rect x="8.500" y="11.200" width="1.700" height="1.900"/></g></svg>
<svg style="left:142.700px;top:628.400px" width="13.300" height="13.200" viewBox="0 0 18 18"><circle cx="9" cy="6.600" r="2.500" fill="#fff"/><path d="M4 14.200c0-3 2.200-4.200 5-4.200s5 1.200 5 4.200z" fill="#fff"/></svg>
<svg style="left:0;top:0" width="1034" height="648" viewBox="0 0 1034 648">
<path d="M619 298.100H1008.500" stroke="#d6d8dc" stroke-width=".8"/>
<path d="M631 298.200v1.500M677 298.200v1.500M722.600 298.200v1.500M768.300 298.200v1.500M814 298.200v1.500M859.800 298.200v1.500M905.500 298.200v1.500M951.200 298.200v1.500M997 298.200v1.500" stroke="#dcdfe5" stroke-width=".6"/>
<path d="M619.9 295.2C621.5 293.5 625.9 287.8 629.4 284.8C632.9 281.8 637.0 278.9 641.0 277.2C645.0 275.5 649.7 274.9 653.2 274.9C656.7 274.9 659.5 275.8 661.9 277.2C664.3 278.6 666.0 280.9 667.7 283.0C669.4 285.1 670.8 288.2 672.3 290.0C673.8 291.8 675.5 293.1 677.0 294.0C678.5 294.9 677.8 295.1 681.6 295.4C685.4 295.6 692.5 295.5 700.0 295.5C707.5 295.5 719.4 295.8 726.9 295.4C734.4 295.0 739.2 294.1 745.0 293.4C750.8 292.7 756.2 291.2 761.7 291.0C767.2 290.8 772.3 291.4 778.1 292.2C783.9 292.9 792.0 295.6 796.6 295.5C801.2 295.4 802.9 293.1 806.0 291.5C809.1 289.9 811.8 287.4 815.0 286.1C818.2 284.9 821.2 284.4 825.3 284.0C829.4 283.6 834.5 285.2 839.6 284.0C844.7 282.8 851.2 278.5 856.0 277.0C860.8 275.5 864.5 274.4 868.3 275.0C872.1 275.6 874.8 277.9 878.6 280.8C882.4 283.7 886.8 289.8 890.9 292.2C895.0 294.6 898.1 296.0 903.2 295.5C908.3 295.0 916.3 291.8 921.6 289.0C926.9 286.2 930.9 282.4 935.0 278.5C939.1 274.6 944.3 267.8 946.2 265.6C947.8 267.2 952.6 272.3 956.0 275.5C959.4 278.7 963.2 282.1 966.7 284.9C970.2 287.6 973.6 290.2 977.0 292.0C980.4 293.8 983.5 295.7 987.2 295.5C991.0 295.3 996.1 293.3 999.5 291.0C1002.9 288.7 1006.3 283.2 1007.7 281.6" stroke="#0f9b0f" stroke-width="1.600" fill="none" stroke-linejoin="round" stroke-linecap="round"/>
</svg>
<svg style="left:0;top:0" width="1034" height="648" viewBox="0 0 1034 648" fill="none" stroke-width="1.500" stroke-linecap="round" stroke-linejoin="round">
<path d="M476.2 430.3C480.2 429.8 491.7 428.1 500.0 427.5C508.3 426.9 509.3 426.7 526.0 426.5C542.7 426.3 574.3 426.2 600.0 426.3C625.7 426.4 653.3 426.6 680.0 426.8C706.7 427.0 726.0 427.5 760.0 427.7C794.0 427.9 849.3 428.0 884.0 428.0C918.7 428.0 947.6 427.9 968.0 427.5C988.4 427.1 1000.1 426.1 1006.5 425.8" stroke="#f7a11a"/>
<path d="M476.200 430.300H1008" stroke="#5a3edb" stroke-width="1.400"/>
<path d="M476.7 430.4C477.5 429.2 479.9 425.5 481.6 423.2C483.3 420.9 485.1 418.7 487.0 416.8C488.9 414.9 490.6 413.2 493.2 411.6C495.8 410.0 498.6 408.2 502.5 407.0C506.4 405.8 510.2 405.2 516.4 404.4C522.6 403.6 532.8 402.7 539.6 402.3C546.4 401.9 551.2 401.7 557.0 402.1C562.8 402.5 569.6 403.6 574.4 404.6C579.2 405.7 582.4 407.1 586.0 408.4C589.6 409.7 591.2 410.9 596.2 412.4C601.2 413.8 609.2 415.7 615.8 417.1C622.3 418.5 629.9 420.1 635.5 420.8C641.1 421.5 644.8 421.9 649.5 421.3C654.2 420.7 657.9 419.7 663.5 417.1C669.1 414.5 677.0 410.1 683.1 405.9C689.2 401.7 695.9 395.5 700.0 391.9C704.1 388.3 706.5 385.6 707.8 384.3C708.8 384.9 710.6 386.4 714.0 387.7C717.4 389.0 721.9 390.6 728.0 391.9C734.1 393.2 743.1 394.5 750.4 395.5C757.7 396.5 763.7 397.4 772.0 398.0C780.3 398.6 790.6 399.0 800.0 399.2C809.4 399.4 818.7 399.3 828.1 399.2C837.5 399.1 846.9 398.8 856.2 398.6C865.6 398.4 874.9 398.3 884.2 398.0C893.6 397.7 902.9 397.3 912.3 396.9C921.6 396.5 931.0 396.2 940.3 395.8C949.6 395.4 958.9 395.1 968.3 394.7C977.6 394.3 989.9 393.6 996.4 393.3C1002.9 393.0 1005.6 392.8 1007.5 392.7" stroke="#149c14"/>
<path d="M476.2 430.3C479.8 428.8 490.6 424.0 498.0 421.3C505.4 418.6 513.0 416.6 520.5 414.3C528.0 412.0 535.4 409.5 542.9 407.3C550.4 405.1 558.8 402.5 565.3 401.1C571.8 399.7 575.7 399.2 582.2 398.9C588.8 398.6 597.1 398.9 604.6 399.2C612.1 399.5 620.9 400.1 627.0 400.9C633.1 401.7 636.3 402.1 641.0 403.9C645.7 405.7 650.8 409.1 655.0 411.5C659.2 413.9 662.5 416.9 666.3 418.5C670.0 420.1 673.3 420.4 677.5 420.8C681.7 421.2 686.4 421.3 691.5 420.8C696.6 420.3 702.3 419.3 708.4 418.0C714.5 416.7 721.9 414.5 728.0 412.9C734.1 411.2 737.5 409.7 744.8 408.1C752.1 406.5 762.8 404.7 772.0 403.1C781.2 401.5 790.6 399.7 800.0 398.3C809.4 396.9 818.7 395.7 828.1 394.7C837.5 393.7 846.9 392.9 856.2 392.2C865.6 391.5 874.9 391.0 884.2 390.5C893.6 390.0 902.9 389.7 912.3 389.4C921.6 389.1 931.0 388.7 940.3 388.5C949.6 388.3 957.1 388.1 968.3 388.0C979.5 387.9 1001.0 387.8 1007.5 387.7" stroke="#1f9af2"/>
<path d="M476.2 430.3C479.8 428.6 489.7 423.5 498.0 419.9C506.3 416.3 516.6 412.0 526.0 408.7C535.4 405.4 545.7 402.5 554.1 400.3C562.5 398.1 569.6 396.5 576.6 395.5C583.6 394.5 589.7 394.1 596.2 394.1C602.7 394.1 609.7 394.5 615.8 395.5C621.9 396.5 627.5 398.1 632.6 400.3C637.8 402.5 642.5 405.9 646.7 408.7C650.9 411.5 654.6 415.3 657.9 417.1C661.2 418.9 663.5 419.2 666.3 419.4C669.1 419.6 671.0 419.5 674.7 418.5C678.4 417.5 683.1 415.7 688.7 413.5C694.3 411.3 701.9 407.8 708.4 405.1C714.9 402.4 721.9 399.5 728.0 397.5C734.1 395.5 739.8 394.4 744.8 393.3C749.8 392.2 751.1 391.6 758.0 391.0C764.9 390.4 774.3 390.1 786.0 389.9C797.7 389.7 811.7 389.7 828.1 389.6C844.5 389.6 867.8 389.6 884.2 389.6C900.6 389.7 914.6 389.7 926.3 389.9C938.0 390.1 944.9 390.4 954.3 391.0C963.6 391.6 975.4 392.9 982.4 393.8C989.4 394.7 992.2 395.2 996.4 396.1C1000.6 397.0 1005.6 398.7 1007.5 399.2" stroke="#1a40e4"/>
</svg>
<span style="left:39.70px;top:9px;font-size:11.8px;line-height:14px;color:#ffffff;letter-spacing:0.245px;">Creatio</span>
<span style="left:160.80px;top:11px;font-size:7.2px;line-height:9px;color:rgba(255,255,255,.8);letter-spacing:-0.008px;">Search...</span>
<span style="left:27.80px;top:44px;font-size:7.2px;line-height:9px;color:rgba(255,255,255,.6);letter-spacing:0.067px;">Search...</span>
<span style="left:9.20px;top:66px;font-size:8.8px;line-height:10px;color:#ffffff;letter-spacing:0.515px;">All apps</span>
<span style="left:29.00px;top:97px;font-size:8.8px;line-height:10px;color:#ffffff;letter-spacing:0.714px;">Home page</span>
<span style="left:29.00px;top:132px;font-size:8.8px;line-height:10px;color:#ffffff;letter-spacing:0.479px;">Feed</span>
<span style="left:29.00px;top:166px;font-size:8.8px;line-height:10px;color:#ffffff;letter-spacing:0.383px;">Leads</span>
<span style="left:29.00px;top:201px;font-size:8.8px;line-height:10px;color:#ffffff;letter-spacing:0.688px;">Accounts</span>
<span style="left:29.00px;top:236px;font-size:8.8px;line-height:10px;color:#ffffff;letter-spacing:0.612px;">Contacts</span>
<span style="left:29.00px;top:270px;font-size:8.8px;line-height:10px;color:#ffffff;letter-spacing:0.587px;">Activities</span>
<span style="left:29.00px;top:305px;font-size:8.8px;line-height:10px;color:#ffffff;letter-spacing:0.731px;">Opportunities</span>
<span style="left:29.00px;top:339px;font-size:8.8px;line-height:10px;color:#ffffff;letter-spacing:0.550px;">Chat</span>
<span style="left:29.00px;top:374px;font-size:8.8px;line-height:10px;color:#ffffff;letter-spacing:0.522px;">Orders</span>
<span style="left:29.00px;top:408px;font-size:8.8px;line-height:10px;color:#ffffff;letter-spacing:0.417px;">Invoices</span>
<span style="left:29.00px;top:443px;font-size:8.8px;line-height:10px;color:#ffffff;letter-spacing:0.568px;">Contracts</span>
<span style="left:170.00px;top:40px;font-size:13.0px;line-height:15px;color:#0c1f3f;-webkit-text-stroke:0.3px #0c1f3f;letter-spacing:0.872px;">Olivia Johnson, Alpha Busines</span>
<span style="left:947.60px;top:44px;font-size:8px;line-height:9px;color:#ffffff;letter-spacing:0.255px;">Save</span>
<span style="left:180.00px;top:65px;font-size:7.4px;line-height:9px;color:#0c1f3f;letter-spacing:-0.384px;">AI</span>
<span style="left:213.40px;top:65px;font-size:7.4px;line-height:9px;color:#0c1f3f;letter-spacing:-0.085px;">Hot_leads</span>
<span style="left:277.70px;top:65px;font-size:7.4px;line-height:9px;color:#0c1f3f;letter-spacing:-0.114px;">Webinar_2025</span>
<span style="left:352.90px;top:65px;font-size:7.4px;line-height:9px;color:#0c1f3f;letter-spacing:-0.600px;">+4</span>
<span style="left:378.00px;top:65px;font-size:7.4px;line-height:9px;color:#0d53db;letter-spacing:0.053px;">Add tag</span>
<span style="left:779.50px;top:66px;font-size:7.0px;line-height:7px;color:#0c1f3f;letter-spacing:0.214px;">Next steps</span>
<span style="left:849.70px;top:66px;font-size:7.0px;line-height:7px;color:#0c1f3f;letter-spacing:0.258px;">Playbook</span>
<span style="left:914.80px;top:66px;font-size:7.0px;line-height:7px;color:#0c1f3f;letter-spacing:0.144px;">Feed</span>
<span style="left:965.90px;top:66px;font-size:7.0px;line-height:7px;color:#0c1f3f;letter-spacing:0.448px;">Attachments</span>
<span style="left:156.80px;top:95px;font-size:6.9px;line-height:7px;color:#ffffff;letter-spacing:0.382px;">Qualification</span>
<span style="left:332.80px;top:95px;font-size:6.9px;line-height:7px;color:#ffffff;letter-spacing:0.318px;">Presentation</span>
<span style="left:507.50px;top:95px;font-size:6.9px;line-height:7px;color:#ffffff;letter-spacing:0.157px;">Proposal</span>
<span style="left:682.20px;top:95px;font-size:6.9px;line-height:7px;color:#222;letter-spacing:0.345px;">Contracting</span>
<span style="left:856.20px;top:95px;font-size:6.9px;line-height:7px;color:#222;letter-spacing:0.220px;">Closed won</span>
<span style="left:212.80px;top:134px;font-size:8.9px;line-height:10px;color:#0c1f3f;-webkit-text-stroke:0.22px #0c1f3f;letter-spacing:0.391px;">Olivia Johnson</span>
<span style="left:212.50px;top:149px;font-size:5.5px;line-height:6px;color:#8a909c;letter-spacing:0.222px;">01.01.1990 (32) • Canada</span>
<span style="left:160.60px;top:196px;font-size:6.7px;line-height:7px;color:#5f6673;letter-spacing:0.505px;">Account</span>
<span style="left:160.60px;top:206px;font-size:7.4px;line-height:9px;color:#0d53db;-webkit-text-stroke:0.2px #0d53db;letter-spacing:0.288px;">Alpha Busines</span>
<span style="left:160.60px;top:222px;font-size:6.7px;line-height:7px;color:#5f6673;letter-spacing:0.301px;">Full job Title</span>
<span style="left:160.60px;top:232px;font-size:7.4px;line-height:9px;color:#181818;-webkit-text-stroke:0.2px #181818;letter-spacing:0.384px;">Marketing Coordinator</span>
<span style="left:171.30px;top:254px;font-size:5.8px;line-height:6px;color:#8b93a1;letter-spacing:0.556px;">Communication options</span>
<span style="left:160.60px;top:292px;font-size:6.6px;line-height:7px;color:#5f6673;letter-spacing:0.389px;">Confidence level</span>
<span style="left:273.60px;top:292px;font-size:7.2px;line-height:9px;color:#0c1f3f;-webkit-text-stroke:0.25px #0c1f3f;letter-spacing:0.550px;">85</span>
<span style="left:160.80px;top:315px;font-size:5.2px;line-height:6px;color:#8b93a1;letter-spacing:0.109px;">0</span>
<span style="left:223.50px;top:315px;font-size:5.2px;line-height:6px;color:#8b93a1;letter-spacing:0.550px;">50</span>
<span style="left:283.60px;top:315px;font-size:5.2px;line-height:6px;color:#8b93a1;letter-spacing:0.522px;">100</span>
<span style="left:160.60px;top:326px;font-size:6.8px;line-height:7px;color:#181818;-webkit-text-stroke:0.2px #181818;letter-spacing:0.303px;">Predictive scoring</span>
<span style="left:269.00px;top:326px;font-size:6.8px;line-height:7px;color:#5f6673;letter-spacing:-0.305px;">87%</span>
<span style="left:160.60px;top:370px;font-size:9.2px;line-height:10px;color:#0c1f3f;-webkit-text-stroke:0.22px #0c1f3f;letter-spacing:0.301px;">Next best offers</span>
<span style="left:161.00px;top:477px;font-size:7.5px;line-height:9px;color:#0d53db;-webkit-text-stroke:0.15px #0d53db;letter-spacing:0.695px;">Platinum card</span>
<span style="left:161.00px;top:491px;font-size:7.35px;line-height:9px;color:#181818;-webkit-text-stroke:0.12px #181818;letter-spacing:0.183px;">Yearly 4% for the available balance,</span>
<span style="left:161.00px;top:502px;font-size:7.35px;line-height:9px;color:#181818;-webkit-text-stroke:0.12px #181818;letter-spacing:0.133px;">free to issue and service, 0.5%</span>
<span style="left:161.00px;top:512px;font-size:7.35px;line-height:9px;color:#181818;-webkit-text-stroke:0.12px #181818;letter-spacing:0.182px;">cashback for all purhases - no exce...</span>
<span style="left:161.00px;top:535px;font-size:6.2px;line-height:7px;color:#6b7280;letter-spacing:0.494px;">Relevance</span>
<span style="left:273.60px;top:536px;font-size:6.6px;line-height:7px;color:#ffffff;-webkit-text-stroke:0.15px #ffffff;letter-spacing:0.550px;">98%</span>
<span style="left:323.40px;top:119px;font-size:7.2px;line-height:9px;color:#181818;letter-spacing:0.656px;">OVERVIEW</span>
<span style="left:384.30px;top:119px;font-size:7.2px;line-height:9px;color:#0d53db;letter-spacing:0.362px;">PROCESSING</span>
<span style="left:453.30px;top:119px;font-size:7.2px;line-height:9px;color:#0d53db;letter-spacing:0.303px;">SALES</span>
<span style="left:495.40px;top:119px;font-size:7.2px;line-height:9px;color:#0d53db;letter-spacing:0.508px;">PRODUCTS</span>
<span style="left:557.00px;top:119px;font-size:7.2px;line-height:9px;color:#0d53db;letter-spacing:0.419px;">HISTORY</span>
<span style="left:609.00px;top:119px;font-size:7.2px;line-height:9px;color:#0d53db;letter-spacing:0.550px;">NEWS</span>
<span style="left:650.70px;top:119px;font-size:7.2px;line-height:9px;color:#0d53db;letter-spacing:0.542px;">ENGAGEMENT</span>
<span style="left:330.70px;top:151px;font-size:7.8px;line-height:9px;color:#ffffff;letter-spacing:0.352px;">Days in funnel</span>
<span style="left:330.30px;top:163px;font-size:15.4px;line-height:17px;color:#ffffff;letter-spacing:-0.600px;">16</span>
<span style="left:503.40px;top:151px;font-size:7.8px;line-height:9px;color:#ffffff;letter-spacing:0.200px;">Days at current stage</span>
<span style="left:503.00px;top:163px;font-size:15.4px;line-height:17px;color:#ffffff;letter-spacing:-0.600px;">14</span>
<span style="left:675.60px;top:151px;font-size:7.8px;line-height:9px;color:#ffffff;letter-spacing:0.339px;">Emails sent</span>
<span style="left:675.20px;top:163px;font-size:15.4px;line-height:17px;color:#ffffff;letter-spacing:0.550px;">6</span>
<span style="left:848.20px;top:151px;font-size:7.8px;line-height:9px;color:#ffffff;letter-spacing:0.514px;">Outgoing calls</span>
<span style="left:847.80px;top:163px;font-size:15.4px;line-height:17px;color:#ffffff;letter-spacing:0.550px;">4</span>
<span style="left:324.00px;top:195px;font-size:6.6px;line-height:7px;color:#5f6673;letter-spacing:0.434px;">Customer need</span>
<span style="left:498.50px;top:195px;font-size:6.6px;line-height:7px;color:#5f6673;letter-spacing:0.511px;">Contact</span>
<span style="left:673.00px;top:195px;font-size:6.6px;line-height:7px;color:#5f6673;letter-spacing:0.645px;">Account</span>
<span style="left:847.70px;top:195px;font-size:6.6px;line-height:7px;color:#5f6673;letter-spacing:0.408px;">Created on</span>
<span style="left:324.00px;top:205px;font-size:7.25px;line-height:9px;color:#181818;-webkit-text-stroke:0.12px #181818;letter-spacing:0.410px;">Marketing management s...</span>
<span style="left:498.50px;top:205px;font-size:7.25px;line-height:9px;color:#0d53db;-webkit-text-stroke:0.12px #0d53db;letter-spacing:0.341px;">Olivia Johnson</span>
<span style="left:673.00px;top:205px;font-size:7.25px;line-height:9px;color:#0d53db;-webkit-text-stroke:0.12px #0d53db;letter-spacing:0.403px;">Alpha Busines</span>
<span style="left:847.70px;top:205px;font-size:7.25px;line-height:9px;color:#181818;-webkit-text-stroke:0.12px #181818;letter-spacing:0.032px;">8/4/2022 12:55 PM</span>
<span style="left:336.80px;top:235px;font-size:7.75px;line-height:9px;color:#0d53db;-webkit-text-stroke:0.15px #0d53db;letter-spacing:0.694px;">Engagement</span>
<span style="left:336.80px;top:257px;font-size:6.6px;line-height:7px;color:#5f6673;letter-spacing:0.340px;">Forms submit (last 3 mo.)</span>
<span style="left:349.00px;top:269px;font-size:8.2px;line-height:9px;color:#0c1f3f;-webkit-text-stroke:0.12px #0c1f3f;letter-spacing:0.438px;">2</span>
<span style="left:336.80px;top:287px;font-size:6.6px;line-height:7px;color:#5f6673;letter-spacing:0.261px;">Last site visit</span>
<span style="left:349.00px;top:299px;font-size:8.2px;line-height:9px;color:#0c1f3f;-webkit-text-stroke:0.12px #0c1f3f;letter-spacing:0.246px;">07.12.2022</span>
<span style="left:478.20px;top:257px;font-size:6.6px;line-height:7px;color:#5f6673;letter-spacing:0.320px;">Duration of last visit, sec</span>
<span style="left:490.40px;top:269px;font-size:8.2px;line-height:9px;color:#0c1f3f;-webkit-text-stroke:0.12px #0c1f3f;letter-spacing:0.550px;">324</span>
<span style="left:478.20px;top:287px;font-size:6.6px;line-height:7px;color:#5f6673;letter-spacing:0.353px;">Average duration, sec</span>
<span style="left:490.40px;top:299px;font-size:8.2px;line-height:9px;color:#0c1f3f;-webkit-text-stroke:0.12px #0c1f3f;letter-spacing:0.711px;">20 324</span>
<span style="left:619.90px;top:258px;font-size:6.6px;line-height:7px;color:#5f6673;letter-spacing:0.397px;">Site visit dynamics &amp; Forms submit dynamics</span>
<span style="left:619.90px;top:303px;font-size:6.4px;line-height:7px;color:#555b66;letter-spacing:0.259px;">March</span>
<span style="left:665.40px;top:303px;font-size:6.4px;line-height:7px;color:#555b66;letter-spacing:0.276px;">April</span>
<span style="left:711.30px;top:303px;font-size:6.4px;line-height:7px;color:#555b66;letter-spacing:0.311px;">May</span>
<span style="left:756.40px;top:303px;font-size:6.4px;line-height:7px;color:#555b66;letter-spacing:0.047px;">June</span>
<span style="left:802.70px;top:303px;font-size:6.4px;line-height:7px;color:#555b66;letter-spacing:-0.025px;">July</span>
<span style="left:848.20px;top:303px;font-size:6.4px;line-height:7px;color:#555b66;letter-spacing:0.339px;">August</span>
<span style="left:894.00px;top:303px;font-size:6.4px;line-height:7px;color:#555b66;letter-spacing:0.086px;">Sept...</span>
<span style="left:940.00px;top:303px;font-size:6.4px;line-height:7px;color:#555b66;letter-spacing:0.112px;">Octo...</span>
<span style="left:985.60px;top:303px;font-size:6.4px;line-height:7px;color:#555b66;letter-spacing:0.192px;">Nove...</span>
<span style="left:336.80px;top:328px;font-size:7.75px;line-height:9px;color:#0d53db;-webkit-text-stroke:0.15px #0d53db;letter-spacing:0.612px;">Email nurturing</span>
<span style="left:340.60px;top:350px;font-size:6.6px;line-height:7px;color:#5f6673;letter-spacing:0.222px;">Send emails (last 3 mo.), %</span>
<span style="left:353.20px;top:362px;font-size:8.2px;line-height:9px;color:#0c1f3f;-webkit-text-stroke:0.12px #0c1f3f;letter-spacing:0.550px;">6</span>
<span style="left:340.60px;top:380px;font-size:6.6px;line-height:7px;color:#5f6673;letter-spacing:0.217px;">Open (last 3 mo.), %</span>
<span style="left:353.20px;top:392px;font-size:8.2px;line-height:9px;color:#0c1f3f;-webkit-text-stroke:0.12px #0c1f3f;letter-spacing:0.550px;">100</span>
<span style="left:340.60px;top:410px;font-size:6.6px;line-height:7px;color:#5f6673;letter-spacing:0.156px;">Clicks (last 3 mo.), %</span>
<span style="left:353.20px;top:422px;font-size:8.2px;line-height:9px;color:#0c1f3f;-webkit-text-stroke:0.12px #0c1f3f;letter-spacing:0.550px;">76</span>
<span style="left:476.80px;top:351px;font-size:6.6px;line-height:7px;color:#5f6673;letter-spacing:0.350px;">Emails dynamics &amp; Response dynamics</span>
<span style="left:489.00px;top:437px;font-size:6.4px;line-height:7px;color:#555b66;letter-spacing:0.044px;">12.06.2024</span>
<span style="left:627.50px;top:437px;font-size:6.4px;line-height:7px;color:#555b66;letter-spacing:0.089px;">02.07.2024</span>
<span style="left:766.70px;top:437px;font-size:6.4px;line-height:7px;color:#555b66;letter-spacing:0.089px;">24.07.2024</span>
<span style="left:905.80px;top:437px;font-size:6.4px;line-height:7px;color:#555b66;letter-spacing:0.056px;">24.08.2024</span>
<span style="left:838.20px;top:362px;font-size:5.6px;line-height:6px;color:#9a9fa8;letter-spacing:0.521px;">Emails</span>
<span style="left:871.90px;top:362px;font-size:5.6px;line-height:6px;color:#9a9fa8;letter-spacing:0.496px;">Clicks</span>
<span style="left:903.80px;top:362px;font-size:5.6px;line-height:6px;color:#9a9fa8;letter-spacing:0.579px;">Opens</span>
<span style="left:937.50px;top:362px;font-size:5.6px;line-height:6px;color:#9a9fa8;letter-spacing:0.550px;">Spam</span>
<span style="left:968.90px;top:362px;font-size:5.6px;line-height:6px;color:#9a9fa8;letter-spacing:0.510px;">Unsubscribes</span>
<span style="left:336.90px;top:463px;font-size:7.9px;line-height:9px;color:#0c1f3f;-webkit-text-stroke:0.15px #0c1f3f;letter-spacing:0.300px;">Contact roles</span>
<span style="left:444.00px;top:463px;font-size:6.6px;line-height:7px;color:#6b7280;letter-spacing:0.219px;">Search</span>
<span style="left:364.70px;top:487px;font-size:6.6px;line-height:7px;color:#5f6673;letter-spacing:0.478px;">Contact</span>
<span style="left:472.60px;top:487px;font-size:6.6px;line-height:7px;color:#5f6673;letter-spacing:0.492px;">Primary contact</span>
<span style="left:580.50px;top:487px;font-size:6.6px;line-height:7px;color:#5f6673;letter-spacing:0.246px;">Role</span>
<span style="left:688.50px;top:487px;font-size:6.6px;line-height:7px;color:#5f6673;letter-spacing:0.504px;">Influence</span>
<span style="left:796.20px;top:487px;font-size:6.6px;line-height:7px;color:#5f6673;letter-spacing:0.461px;">Decision-making factors</span>
<span style="left:903.70px;top:487px;font-size:6.6px;line-height:7px;color:#5f6673;letter-spacing:0.532px;">Loyalty</span>
<span style="left:353.80px;top:508px;font-size:6.6px;line-height:7px;color:#5f6673;letter-spacing:-0.600px;">1</span>
<span style="left:364.70px;top:507px;font-size:7.25px;line-height:9px;color:#0d53db;-webkit-text-stroke:0.12px #0d53db;letter-spacing:0.414px;">Andrew Baker</span>
<span style="left:472.60px;top:507px;font-size:7.25px;line-height:9px;color:#181818;-webkit-text-stroke:0.12px #181818;letter-spacing:-0.064px;">Yes</span>
<span style="left:580.50px;top:507px;font-size:7.25px;line-height:9px;color:#181818;-webkit-text-stroke:0.12px #181818;letter-spacing:0.118px;">Contact person</span>
<span style="left:688.50px;top:507px;font-size:7.25px;line-height:9px;color:#181818;-webkit-text-stroke:0.12px #181818;letter-spacing:0.841px;">Medium</span>
<span style="left:796.20px;top:507px;font-size:7.25px;line-height:9px;color:#181818;-webkit-text-stroke:0.12px #181818;letter-spacing:-0.220px;">Ease of Use</span>
<span style="left:903.70px;top:507px;font-size:7.25px;line-height:9px;color:#181818;-webkit-text-stroke:0.12px #181818;letter-spacing:0.295px;">2 – Supportive</span>
<span style="left:336.90px;top:540px;font-size:7.9px;line-height:9px;color:#0c1f3f;-webkit-text-stroke:0.15px #0c1f3f;letter-spacing:0.558px;">Opportunity team</span>
<span style="left:462.50px;top:540px;font-size:6.6px;line-height:7px;color:#6b7280;letter-spacing:0.239px;">Search</span>
<span style="left:364.70px;top:564px;font-size:6.6px;line-height:7px;color:#5f6673;letter-spacing:0.478px;">Contact</span>
<span style="left:688.50px;top:564px;font-size:6.6px;line-height:7px;color:#5f6673;letter-spacing:0.246px;">Role</span>
<span style="left:353.80px;top:585px;font-size:6.6px;line-height:7px;color:#5f6673;letter-spacing:-0.600px;">1</span>
<span style="left:364.70px;top:584px;font-size:7.25px;line-height:9px;color:#0d53db;-webkit-text-stroke:0.12px #0d53db;letter-spacing:0.439px;">James Smith</span>
<span style="left:688.50px;top:584px;font-size:7.25px;line-height:9px;color:#181818;-webkit-text-stroke:0.12px #181818;letter-spacing:0.336px;">Sales manager</span>
<span style="left:352.30px;top:607px;font-size:6.6px;line-height:7px;color:#5f6673;letter-spacing:0.328px;">2</span>
<span style="left:364.70px;top:606px;font-size:7.25px;line-height:9px;color:#0d53db;-webkit-text-stroke:0.12px #0d53db;letter-spacing:0.229px;">Caleb Jones</span>
<span style="left:688.50px;top:606px;font-size:7.25px;line-height:9px;color:#181818;-webkit-text-stroke:0.12px #181818;letter-spacing:0.300px;">Sales representative</span>
<span style="left:57.20px;top:632px;font-size:6.8px;line-height:7px;color:#0c1f3f;letter-spacing:0.433px;">Accounts</span>
<span style="left:160.10px;top:632px;font-size:6.8px;line-height:7px;color:#0c1f3f;letter-spacing:0.396px;">Contacts</span>
<span style="left:216.60px;top:633px;font-size:4.6px;line-height:5px;color:#cfc8ff;letter-spacing:0.150px;">+3</span>
<span style="left:965.90px;top:10px;font-size:9px;line-height:10px;color:#3a2596;font-weight:700;">?</span>
<span style="left:166.40px;top:433px;font-size:7.5px;line-height:9px;color:#fff;font-weight:700;letter-spacing:2.337px;text-shadow:.4px .5px .3px rgba(60,0,20,.7);">1234</span>
<span style="left:198.70px;top:433px;font-size:7.5px;line-height:9px;color:#fff;font-weight:700;letter-spacing:2.838px;text-shadow:.4px .5px .3px rgba(60,0,20,.7);">4568</span>
<span style="left:229.30px;top:433px;font-size:7.5px;line-height:9px;color:#fff;font-weight:700;letter-spacing:2.137px;text-shadow:.4px .5px .3px rgba(60,0,20,.7);">1234</span>
<span style="left:261.90px;top:433px;font-size:7.5px;line-height:9px;color:#fff;font-weight:700;letter-spacing:2.738px;text-shadow:.4px .5px .3px rgba(60,0,20,.7);">4568</span>
<span style="left:166.40px;top:442px;font-size:3.8px;line-height:4px;color:#f3c9cf;letter-spacing:1.716px;">1234</span>
<span style="left:235.00px;top:444px;font-size:1.9px;line-height:2px;color:#f0c0c8;letter-spacing:0.342px;">VALID FROM</span>
<span style="left:266.60px;top:444px;font-size:1.9px;line-height:2px;color:#f0c0c8;letter-spacing:0.321px;">GOOD THRU</span>
<span style="left:234.50px;top:446px;font-size:5.6px;line-height:6px;color:#fff;font-weight:700;letter-spacing:1.575px;text-shadow:.4px .5px .3px rgba(60,0,20,.7);">00/00</span>
<span style="left:266.00px;top:446px;font-size:5.6px;line-height:6px;color:#fff;font-weight:700;letter-spacing:1.525px;text-shadow:.4px .5px .3px rgba(60,0,20,.7);">00/00</span>
<span style="left:166.80px;top:457px;font-size:4.3px;line-height:5px;color:#efc3c6;font-weight:700;letter-spacing:2.057px;">CARDHOLDER NAME</span>
</div></body></html>
